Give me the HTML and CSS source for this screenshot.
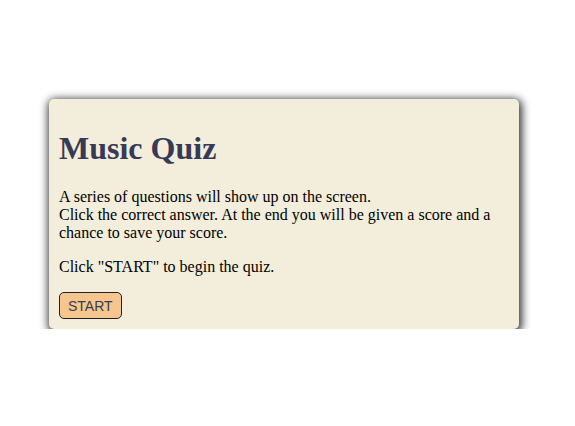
FILE: index.html
```html
<!DOCTYPE html>
<html>
<head>
<meta charset="utf-8">
<link rel="stylesheet" href="styles.css">
</head>
<body>
<main class="page">
  <section class="card">
    <h1 class="title">Music Quiz</h1>
    <p class="text">A series of questions will show up on the screen.<br>Click the correct answer. At the end you will be given a score and a chance to save your score.</p>
    <p class="text">Click "START" to begin the quiz.</p>
    <button class="start">START</button>
  </section>
</main>
</body>
</html>
```
FILE: styles.css
```css
html, body {
  margin: 0;
  padding: 0;
  background: #ffffff;
}
.page {
  padding: 99px 0 0 49px;
}
.card {
  box-sizing: border-box;
  width: 470px;
  padding: 10px;
  background: #f3eddb;
  border-radius: 5px;
  box-shadow: 1px 2px 9px 2px rgba(0, 0, 0, 0.8);
  font-family: "Liberation Serif", "Times New Roman", serif;
  font-size: 16px;
  color: #000;
}
.title {
  margin: 21px 0 21px;
  font-size: 32px;
  font-weight: bold;
  color: #373a55;
}
.text {
  margin: 0 0 16px;
}
.start {
  display: block;
  margin: 0;
  padding: 4px 8px;
  height: 27px;
  font-family: "Liberation Sans", Arial, sans-serif;
  font-size: 14px;
  color: #3a3a52;
  background: #f7c68e;
  border: 1px solid #222;
  border-radius: 5px;
}
```
